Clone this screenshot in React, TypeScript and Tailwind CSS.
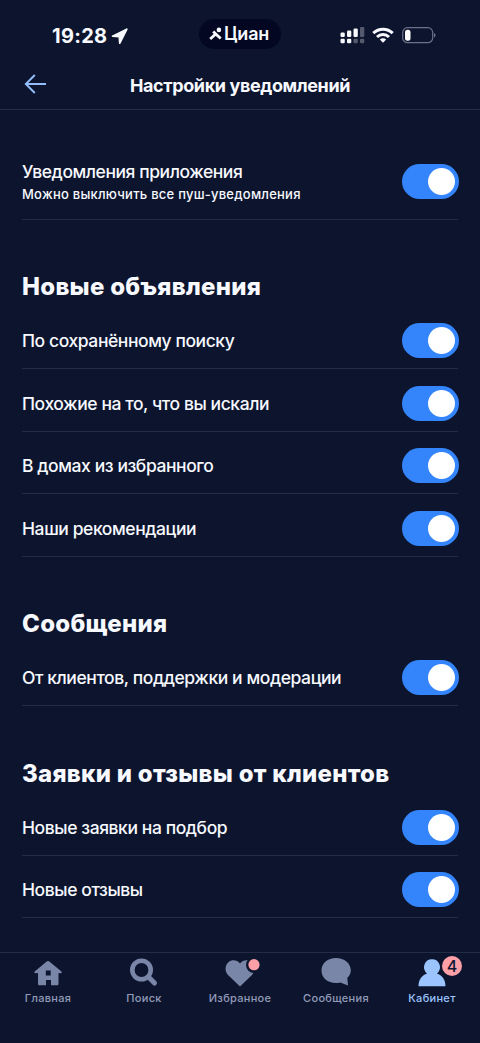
import { useState } from "react";
import type { ReactNode } from "react";

type Option = { id: string; label: string };

const SECTIONS: { title: string; options: Option[] }[] = [
  {
    title: "Новые объявления",
    options: [
      { id: "saved", label: "По сохранённому поиску" },
      { id: "similar", label: "Похожие на то, что вы искали" },
      { id: "houses", label: "В домах из избранного" },
      { id: "recommended", label: "Наши рекомендации" },
    ],
  },
  {
    title: "Сообщения",
    options: [{ id: "messages", label: "От клиентов, поддержки и модерации" }],
  },
  {
    title: "Заявки и отзывы от клиентов",
    options: [
      { id: "requests", label: "Новые заявки на подбор" },
      { id: "reviews", label: "Новые отзывы" },
    ],
  },
];

function Toggle({ label }: { label: string }) {
  const [on, setOn] = useState(true);

  return (
    <button
      type="button"
      role="switch"
      aria-checked={on}
      aria-label={label}
      onClick={() => setOn(!on)}
      className={`-mr-[1.400px] flex h-[35px] w-[57px] shrink-0 items-center rounded-full px-1 ${on ? "justify-end bg-[#3484fb]" : "justify-start bg-[#3a4560]"}`}
    >
      <span className="size-[27px] rounded-full bg-white" />
    </button>
  );
}

function StatusBar() {
  return (
    <div className="flex h-[60px] shrink-0 items-start">
      <div className="flex w-[199px] items-center pt-[22px] pl-[52px]">
        <span className="text-[20px] leading-[28px] font-bold tracking-[0.300px]">19:28</span>
        <svg className="ml-[4px] size-[17px]" viewBox="0 0 17 17" fill="currentColor" stroke="currentColor" strokeWidth="1.800" strokeLinejoin="round">
          <path d="M15.800 1.200 1.600 8.200 8.300 8.700 8.800 15.200Z" />
        </svg>
      </div>
      <div className="mt-[19px] flex h-[30px] w-[82px] items-center rounded-full bg-[#030722] pl-[10px]">
        <svg className="h-[14px] w-[13px]" viewBox="0 0 13 14" fill="none" stroke="currentColor">
          <path d="M1.200 12 6.700 7l5 4.500M4.200 4.500 7.300 7.600" strokeWidth="2.800" />
          <circle cx="9.900" cy="2.900" r="2.300" fill="currentColor" stroke="none" />
        </svg>
        <span className="ml-[2px] text-[18px] leading-[24px] font-semibold tracking-[-0.2px]">Циан</span>
      </div>
      <div className="mt-[26px] flex h-[18px] items-center pl-[59px]">
        <svg className="h-[18px] w-[25px]" viewBox="0 0 25 18" fill="currentColor">
          <rect x="0.500" y="6.500" width="4.300" height="4.500" rx="1.200" />
          <rect x="7" y="4.500" width="4.300" height="6.500" rx="1.200" />
          <rect x="13.500" y="2.500" width="4.300" height="8.500" rx="1.200" />
          <rect x="20" y="1" width="4.300" height="10" rx="1.200" opacity="0.300" />
          <rect x="0.500" y="12.700" width="4.300" height="4.500" rx="1.200" />
          <rect x="7" y="12.700" width="4.300" height="4.500" rx="1.200" />
          <rect x="13.500" y="12.700" width="4.300" height="4.500" rx="1.200" opacity="0.300" />
          <rect x="20" y="12.700" width="4.300" height="4.500" rx="1.200" opacity="0.300" />
        </svg>
        <svg className="ml-[7px] h-[16px] w-[22px]" viewBox="0 0 22 16" fill="none" stroke="currentColor" strokeWidth="3">
          <path d="M1.300 6.100c5.500-5.300 13.900-5.300 19.400 0M5 10c3.400-3.300 8.600-3.300 12 0" />
          <path d="m11 15.700 3.200-3.200c-1.800-1.600-4.600-1.600-6.400 0Z" fill="currentColor" stroke="none" />
        </svg>
        <svg className="ml-[7.500px] h-[17px] w-[34px]" viewBox="0 0 34 17" fill="none">
          <rect x="0.700" y="0.700" width="30" height="15" rx="4.800" stroke="#6b7188" strokeWidth="1.200" />
          <rect x="3" y="2.700" width="5.500" height="11" rx="2.500" fill="white" />
          <path d="M32 6c2 .8 2 3.700 0 4.500Z" fill="#6b7188" />
        </svg>
      </div>
    </div>
  );
}

function Header() {
  return (
    <header className="grid h-[50px] shrink-0 grid-cols-[80px_1fr_80px] items-center border-b border-[#252d46]">
      <button type="button" aria-label="Назад" className="-mt-[2px] pl-[24px] text-[#93bcfd]">
        <svg className="h-[20px] w-[23px]" viewBox="0 0 23 20" fill="none" stroke="currentColor" strokeWidth="1.900">
          <path d="M22 10H2M10.800 1 1.800 10l9 9" />
        </svg>
      </button>
      <h1 className="pt-[2px] text-center text-[18px] leading-[24px] font-bold tracking-[-0.380px] whitespace-nowrap">
        Настройки уведомлений
      </h1>
    </header>
  );
}

function OptionRow({ label }: { label: string }) {
  return (
    <div className="flex h-[62.500px] items-center justify-between border-b border-[#252d46] pt-[7px]">
      <span className="pt-[1px] text-[17.500px] leading-[24px] font-medium tracking-[-0.420px]">{label}</span>
      <Toggle label={label} />
    </div>
  );
}

function Tab({ label, active, children }: { label: string; active?: boolean; children: ReactNode }) {
  return (
    <button
      type="button"
      className={`flex w-[96px] flex-col items-center ${active ? "text-[#9cc5ff]" : "text-[#7a86a8]"}`}
    >
      <span className="relative flex h-[30px] w-[40px] items-center justify-center">{children}</span>
      <span
        className={`mt-[2px] text-[11px] leading-[16px] font-medium tracking-[0.300px] ${active ? "" : "text-[#929bb9]"}`}
      >
        {label}
      </span>
    </button>
  );
}

function TabBar() {
  return (
    <nav className="flex h-[91px] shrink-0 items-start border-t border-[#252d46] pt-[5px]">
      <Tab label="Главная">
        <svg className="h-[30px] w-[40px]" viewBox="0 0 40 30" fill="currentColor">
          <path
            fillRule="evenodd"
            d="M19 3.300q1-.8 2 0l12.500 10.200q.7.700.1 1.300-.5.500-1.200.4L30.500 15v11q0 1.300-1.300 1.300H23V22h-5v5.300h-7q-1 0-1-1.300V15l-2.400.2q-.7.100-1.100-.4-.5-.7.200-1.300ZM17.800 12.500v5h4.900v-5Z"
          />
        </svg>
      </Tab>
      <Tab label="Поиск">
        <svg className="h-[30px] w-[40px]" viewBox="0 0 40 30" fill="none" stroke="currentColor">
          <circle cx="17.500" cy="12" r="9.200" strokeWidth="4.600" />
          <path d="m24.500 19 6 6" strokeWidth="5" strokeLinecap="round" />
        </svg>
      </Tab>
      <Tab label="Избранное">
        <svg className="h-[30px] w-[40px]" viewBox="0 0 40 30" fill="currentColor">
          <path d="M20 28.500 8 17C4.500 13 4.800 7.500 8.500 4.200 12 1.200 17 1.800 20 5.500 23 1.800 28 1.200 31.500 4.200c3.700 3.300 4 8.800.5 12.800Z" />
          <circle cx="34" cy="7" r="8" fill="#0d152e" />
          <circle cx="34" cy="6.700" r="5.600" fill="#ff9fa8" />
        </svg>
      </Tab>
      <Tab label="Сообщения">
        <svg className="h-[30px] w-[40px]" viewBox="0 0 40 30" fill="currentColor">
          <path d="M20 0C11.800 0 5.500 5.200 5.500 12.500S11.500 25 20 25c1.500 0 3-.1 4.300-.5l7.700 3-.7-7.700c2.300-2 3.500-4.500 3.500-7.300C34.800 5.200 28.200 0 20 0Z" />
        </svg>
      </Tab>
      <Tab label="Кабинет" active>
        <svg className="h-[30px] w-[40px]" viewBox="0 0 40 30" fill="currentColor">
          <path d="M20 1.200a8 8 0 0 0-4.900 14.300C10 17 6.500 21.500 6.500 28.200h27C33.500 21.500 30 17 24.900 15.500A8 8 0 0 0 20 1.200Z" />
        </svg>
        <span className="absolute -top-[2px] left-[30px] flex size-[20px] items-center justify-center rounded-full bg-[#ff9fa8] text-[16px] leading-none font-medium text-[#101831]">
          4
        </span>
      </Tab>
    </nav>
  );
}

export default function App() {
  return (
    <div className="flex h-[1043px] w-[480px] flex-col overflow-hidden bg-[#0d152e] font-['Inter',sans-serif] text-[#f7f9ff]">
      <StatusBar />
      <Header />
      <main className="grow px-[22px]">
        <div className="flex h-[109.500px] items-center justify-between border-b border-[#252d46] pt-[34px]">
          <div className="pt-[2px]">
            <p className="text-[17.500px] leading-[24px] font-medium tracking-[-0.440px]">Уведомления приложения</p>
            <p className="text-[13px] leading-[21px] font-medium tracking-[0.240px]">
              Можно выключить все пуш-уведомления
            </p>
          </div>
          <Toggle label="Уведомления приложения" />
        </div>
        {SECTIONS.map((section) => (
          <section key={section.title}>
            <h2 className="flex h-[87px] items-end pb-[3.500px] text-[24px] leading-[32px] font-extrabold tracking-[0.280px]">
              {section.title}
            </h2>
            {section.options.map((option) => (
              <OptionRow key={option.id} label={option.label} />
            ))}
          </section>
        ))}
      </main>
      <TabBar />
    </div>
  );
}
